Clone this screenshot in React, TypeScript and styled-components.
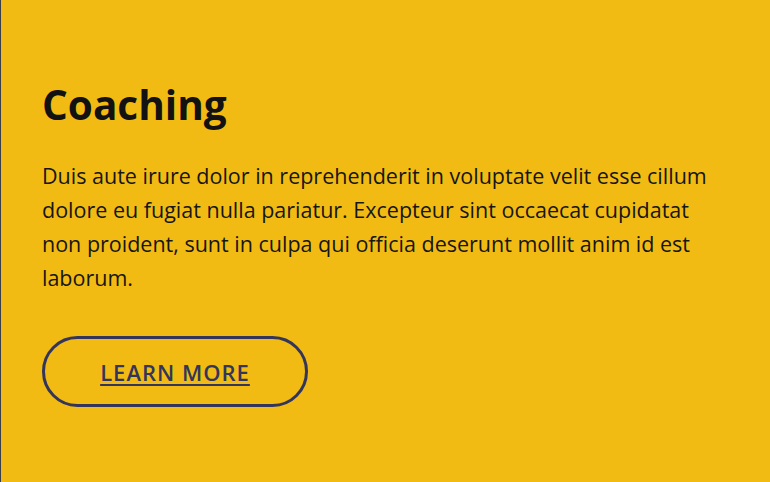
import React from "react";
import styled, { createGlobalStyle } from "styled-components";

const Global = createGlobalStyle`
  html, body { margin: 0; padding: 0; background: #f2bb13; }
  #root { min-height: 100vh; }
`;

const Panel = styled.section`
  box-sizing: border-box;
  width: 770px;
  height: 482px;
  background: #f2bb13;
  border-left: 1px solid #3b4048;
  padding: 78px 48px 0 41px;
  font-family: "Open Sans", "Liberation Sans", sans-serif;
  color: #111;
`;

const Title = styled.h2`
  margin: 0;
  font-size: 40.5px;
  font-weight: 700;
  line-height: 54px;
  color: #121212;
`;

const Body = styled.p`
  margin: 27px 0 0;
  font-size: 21.5px;
  line-height: 34px;
  color: #161616;
`;

const Button = styled.a`
  box-sizing: border-box;
  display: inline-flex;
  align-items: center;
  justify-content: center;
  margin-top: 41px;
  width: 266px;
  height: 71px;
  border: 3px solid #33355a;
  border-radius: 36px;
  color: #33355a;
  font-size: 22px;
  font-weight: 600;
  letter-spacing: 1px;
  text-decoration: underline;
  text-underline-offset: 3px;
  text-decoration-thickness: 2px;
  cursor: pointer;
`;

export default function App() {
  return (
    <>
      <Global />
      <Panel>
        <Title>Coaching</Title>
        <Body>
          Duis aute irure dolor in reprehenderit in voluptate velit esse cillum
          dolore eu fugiat nulla pariatur. Excepteur sint occaecat cupidatat non
          proident, sunt in culpa qui officia deserunt mollit anim id est
          laborum.
        </Body>
        <Button>LEARN MORE</Button>
      </Panel>
    </>
  );
}
